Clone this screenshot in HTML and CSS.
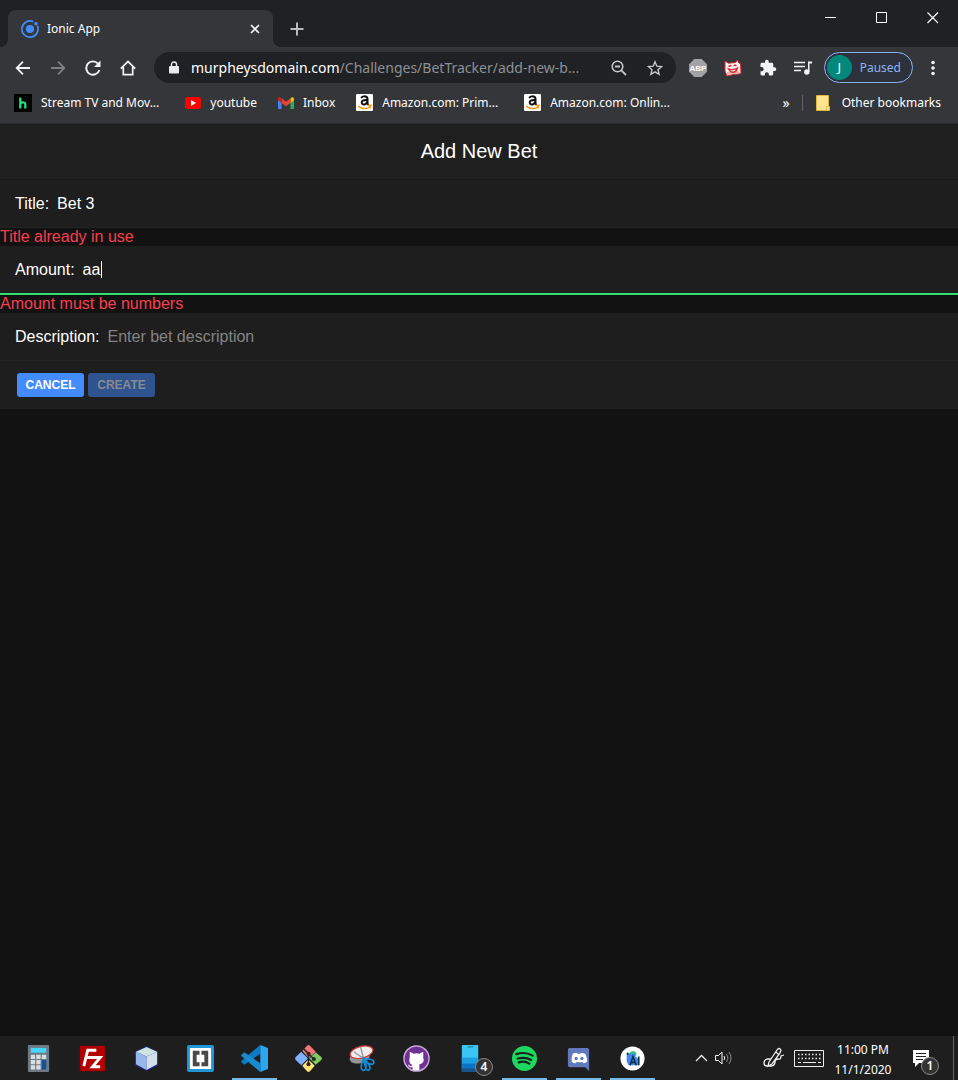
FILE: index.html
```
<!DOCTYPE html>
<html lang="en">
<head>
<meta charset="utf-8">
<meta name="viewport" content="width=device-width, initial-scale=1">
<title>Ionic App</title>
<link rel="stylesheet" href="styles.css">
</head>
<body>
<header class="browser">
  <div class="tab-strip">
    <div class="tab">
      <svg class="tab-icon" viewBox="0 0 18 18"><path d="M12.2 1.6A8.1 8.1 0 1 0 16.4 5.8" fill="none" stroke="#428cff" stroke-width="1.7"/><circle cx="9" cy="9" r="4.1" fill="#428cff"/><circle cx="15" cy="3.7" r="1.8" fill="#428cff"/></svg>
      <span class="tab-title">Ionic App</span>
      <button class="icon-button tab-close" aria-label="Close tab"><svg width="10" height="10" viewBox="0 0 10 10"><path d="M1 1l8 8M9 1L1 9" stroke="#fff" stroke-width="1.7"/></svg></button>
    </div>
    <button class="icon-button new-tab" aria-label="New tab"><svg width="14" height="14" viewBox="0 0 14 14"><path d="M7 .5v13M.5 7h13" stroke="#b9bbbf" stroke-width="2"/></svg></button>
    <div class="window-controls">
      <button class="icon-button" aria-label="Minimize"><svg width="12" height="12" viewBox="0 0 12 12"><path d="M0 5.5h11" stroke="#fff"/></svg></button>
      <button class="icon-button" aria-label="Maximize"><svg width="12" height="12" viewBox="0 0 12 12"><path d="M.5.5h10v10H.5z" fill="none" stroke="#fff"/></svg></button>
      <button class="icon-button" aria-label="Close"><svg width="12" height="12" viewBox="0 0 12 12"><path d="M.5.5l10.500 10.500M11 .5L.5 11" stroke="#fff" stroke-width="1.1"/></svg></button>
    </div>
  </div>
  <div class="nav-bar">
    <div class="nav-buttons">
      <button class="icon-button" aria-label="Back"><svg width="16" height="16" viewBox="0 0 16 16"><path d="M15 8H2M8 1.700L1.700 8 8 14.300" fill="none" stroke="#f1f3f4" stroke-width="1.800"/></svg></button>
      <button class="icon-button" aria-label="Forward"><svg width="16" height="16" viewBox="0 0 16 16"><path d="M1 8h13M8 1.700L14.300 8 8 14.300" fill="none" stroke="#7d7f83" stroke-width="1.800"/></svg></button>
      <button class="icon-button" aria-label="Reload"><svg width="16" height="16" viewBox="0 0 16 16"><path d="M14.400 10A6.700 6.700 0 1 1 13 3.600" fill="none" stroke="#f1f3f4" stroke-width="1.900"/><path d="M15.500.5v6.500H9z" fill="#f1f3f4"/></svg></button>
      <button class="icon-button" aria-label="Home"><svg width="16" height="16" viewBox="0 0 16 16"><path d="M.8 8.700L8 1.500l7.200 7.200M3.300 7v7.600h9.400V7" fill="none" stroke="#f1f3f4" stroke-width="1.700"/></svg></button>
    </div>
    <div class="address-bar">
      <svg class="lock" width="10" height="13" viewBox="0 0 10 13"><path d="M2.500 5V3.500a2.500 2.500 0 0 1 5 0V5" fill="none" stroke="#e8eaed" stroke-width="1.400"/><rect y="5" width="10" height="7.500" rx="1" fill="#e8eaed"/></svg>
      <div class="url" role="textbox" aria-label="Address" tabindex="0">murpheysdomain.com<span class="url-path">/Challenges/BetTracker/add-new-b...</span></div>
      <button class="icon-button" aria-label="Zoom"><svg width="16" height="16" viewBox="0 0 16 16"><circle cx="6.500" cy="6.500" r="5.300" fill="none" stroke="#c4c6c9" stroke-width="1.600"/><path d="M4 6.500h5M10.300 10.300l4.700 4.700" stroke="#c4c6c9" stroke-width="1.800"/></svg></button>
      <button class="icon-button" aria-label="Bookmark"><svg width="16" height="16" viewBox="0 0 16 16"><path d="M8 1.800l1.800 4.400 4.800.4-3.600 3.100 1.100 4.600L8 11.800l-4.100 2.500L5 9.700 1.400 6.600l4.800-.4z" fill="none" stroke="#c4c6c9" stroke-width="1.400"/></svg></button>
    </div>
    <div class="extensions">
      <button class="icon-button" aria-label="Adblock Plus"><svg width="18" height="18" viewBox="0 0 18 18"><path d="M5.300 0h7.400L18 5.300v7.400L12.700 18H5.300L0 12.700V5.300z" fill="#a2a2a2"/><text class="abp" x="9" y="12" text-anchor="middle">ABP</text></svg></button>
      <button class="icon-button" aria-label="Cat extension"><svg width="18" height="18" viewBox="0 0 18 18"><path d="M1 2l3.500 2.200 7-.7L13.500 1l1.300 3 1.700.7.500 10-8 .8-6 1.500L1 12z" fill="#fff1ef" stroke="#c92b33"/><path d="M3 13l12-1 1 2-13 2z" fill="#f1b4b2"/><path d="M4.500 7.500l2-1 1 .8M9.500 7l1.500-1 1.500.7M4.500 10q4.500 1.500 9-.8-1 3.500-4 4t-5-3.200z" fill="none" stroke="#d82e37" stroke-width="1.400"/></svg></button>
      <button class="icon-button" aria-label="Extensions"><svg width="18" height="18" viewBox="0 0 24 24"><path fill="#f1f3f4" d="M20.500 11H19V7c0-1.100-.9-2-2-2h-4V3.500a2.500 2.500 0 0 0-5 0V5H4c-1.100 0-2 .9-2 2v3.800h1.500a2.700 2.700 0 0 1 0 5.400H2V20c0 1.100.9 2 2 2h3.800v-1.500a2.700 2.700 0 0 1 5.400 0V22H17c1.100 0 2-.9 2-2v-4h1.500a2.500 2.500 0 0 0 0-5z"/></svg></button>
      <button class="icon-button" aria-label="Media controls"><svg width="18" height="18" viewBox="0 0 18 18"><path d="M0 3.500h11M0 7.500h11M0 11.500h7" stroke="#f1f3f4" stroke-width="1.700"/><path d="M14 13V2.600h4v2h-2.500V13z" fill="#f1f3f4"/><circle cx="12.800" cy="13" r="2.700" fill="#f1f3f4"/></svg></button>
    </div>
    <button class="profile"><span class="avatar">J</span>Paused</button>
    <button class="icon-button menu" aria-label="Menu"><svg width="4" height="16" viewBox="0 0 4 16"><g fill="#f1f3f4"><circle cx="2" cy="2.500" r="1.800"/><circle cx="2" cy="8" r="1.800"/><circle cx="2" cy="13.500" r="1.800"/></g></svg></button>
  </div>
  <nav class="bookmarks" aria-label="Bookmarks">
    <a class="bookmark b-stream" href="#"><svg width="18" height="18" viewBox="0 0 18 18"><path fill="#000" d="M0 0h18v18H0z"/><path d="M6.300 3.500v11M6.300 9q5-1.800 5 1.500v4" fill="none" stroke="#1ce783" stroke-width="2.200"/></svg>Stream TV and Mov...</a>
    <a class="bookmark" href="#"><svg width="16" height="16" viewBox="0 0 16 16"><rect y="2" width="16" height="12" rx="2.500" fill="#f00"/><path d="M6 5l5 3-5 3z" fill="#fff"/></svg>youtube</a>
    <a class="bookmark" href="#"><svg width="16" height="16" viewBox="0 0 16 16"><path d="M0 4v10h3.600V7z" fill="#4285f4"/><path d="M12.400 7v7H16V4z" fill="#34a853"/><path d="M12.400 3.500V8L16 5.300V3.500q-1.200-2.500-3.600 0z" fill="#fbbc04"/><path d="M3.600 3.300L8 6.700l4.400-3.400V8L8 11.300 3.600 8z" fill="#ea4335"/><path d="M0 3.500v1.800L3.600 8V3.300Q1 1 0 3.500z" fill="#c5221f"/></svg>Inbox</a>
    <a class="bookmark" href="#"><svg width="17" height="17" viewBox="0 0 17 17"><rect width="17" height="17" rx="1" fill="#fff"/><path d="M5.200 4.200Q6 2.200 8.500 2.200t3 2.300v5l1 1.500M11 6Q5.300 5.800 5.700 8.700c.4 3 4.800 2.300 5.300-1" fill="none" stroke="#111" stroke-width="2"/><path d="M2 12.200q6 4.500 12 1M12 11.500l3-.2-1 3" fill="none" stroke="#f79b18" stroke-width="1.500"/></svg>Amazon.com: Prim...</a>
    <a class="bookmark b-online" href="#"><svg width="17" height="17" viewBox="0 0 17 17"><rect width="17" height="17" rx="1" fill="#fff"/><path d="M5.200 4.200Q6 2.200 8.500 2.200t3 2.300v5l1 1.500M11 6Q5.300 5.800 5.700 8.700c.4 3 4.800 2.300 5.300-1" fill="none" stroke="#111" stroke-width="2"/><path d="M2 12.200q6 4.500 12 1M12 11.500l3-.2-1 3" fill="none" stroke="#f79b18" stroke-width="1.500"/></svg>Amazon.com: Onlin...</a>
    <button class="icon-button more" aria-label="More bookmarks">»</button>
    <a class="bookmark other" href="#"><svg width="14" height="16" viewBox="0 0 14 16"><path d="M.5.5h12v11h1v4H.5z" fill="#ffe391" stroke="#dfb93f"/><path d="M10.500 15v-3.500h3" fill="none" stroke="#dfb93f"/></svg>Other bookmarks</a>
  </nav>
</header>

<main class="app">
  <h1 class="app-title">Add New Bet</h1>
  <form class="bet-form">
    <div class="item">
      <label for="title">Title:</label>
      <div class="field"><input id="title" type="text" value="Bet 3"></div>
    </div>
    <p class="error">Title already in use</p>
    <div class="item item-active">
      <label for="amount">Amount:</label>
      <div class="field"><input id="amount" type="text" value="aa"><span class="caret"></span></div>
    </div>
    <p class="error">Amount must be numbers</p>
    <div class="item">
      <label for="description">Description:</label>
      <div class="field"><input id="description" type="text" placeholder="Enter bet description"></div>
    </div>
    <div class="item actions">
      <button class="action" type="button">CANCEL</button>
      <button class="action" type="submit" disabled>CREATE</button>
    </div>
  </form>
</main>

<footer class="taskbar">
  <div class="apps">
    <button class="task" aria-label="Calculator"><svg viewBox="0 0 28 28"><rect x="3" width="22" height="28" rx="1" fill="#6d7984"/><path fill="#45d4fb" d="M6 3h16v5H6z"/><path fill="#d9dde0" d="M6 10h4.500v4.500H6zM11.700 10h4.500v4.500h-4.500zM17.400 10H22v4.500h-4.600zM6 15.500h4.500V20H6zM11.700 15.500h4.500V20h-4.500zM6 21h4.500v4.500H6zM11.700 21h4.500v4.500h-4.500z"/><path fill="#12529b" d="M17.400 15.500H22v10h-4.600z"/></svg></button>
    <button class="task" aria-label="FileZilla"><svg viewBox="0 0 28 28"><path fill="#b50000" stroke="#850000" stroke-dasharray="1.500" d="M1 1h26v26H1z"/><path d="M18 5.500H9L5 22M7.500 13H15M13 13h9L14 22.500h8" fill="none" stroke="#fff" stroke-width="3"/></svg></button>
    <button class="task" aria-label="VirtualBox"><svg viewBox="0 0 28 28"><path d="M14 1l12 6v14l-12 6-12-6V7z" fill="#1d2684"/><path d="M14 2l11 5-11 5L3 7z" fill="#cce3df"/><path d="M3 7l11 5v14L3 20z" fill="#96b7ee"/><path d="M25 7l-11 5v14l11-6z" fill="#d2dfeb"/></svg></button>
    <button class="task" aria-label="Brackets"><svg viewBox="0 0 28 28"><rect width="28" height="28" rx="2" fill="#2196d6"/><rect x="3" y="3" width="22" height="22" rx="1" fill="#fff"/><path d="M13 6H6v16h7v-4h-3v-8h3zM15 6h7v16h-7v-4h3v-8h-3z" fill="#494949"/></svg></button>
    <button class="task running" aria-label="Visual Studio Code"><svg viewBox="0 0 28 28"><path d="M20 0v9L3.500 20.500.3 18v-1.500z" fill="#0b7ac0"/><path d="M20 28v-9L3.500 7.500.3 10v1.500z" fill="#168bd2"/><path d="M20 0l8 3v22l-8 3z" fill="#29a7f1"/></svg></button>
    <button class="task" aria-label="Git"><svg viewBox="0 0 28 28"><path d="M12.500.8q1.500-1.500 3 0L21.500 7 14.500 14 7.500 6z" fill="#f47575"/><path d="M6.500 7L13.500 14l-7 7L.8 15.500q-1.500-1.500 0-3z" fill="#80b0ff"/><path d="M21.500 7.500l5.700 5q1.500 1.500 0 3l-5.700 5L15 14z" fill="#80ca62"/><path d="M14 15l6.500 6.500-5 5.700q-1.500 1.500-3 0l-5-5.700z" fill="#ffe174"/><path d="M9 4l5 5v11M14 9l5 5" fill="none" stroke="#252525" stroke-width="1.600"/><g fill="#252525"><circle cx="14" cy="9" r="2.100"/><circle cx="14" cy="20" r="2.100"/><circle cx="19.500" cy="14.500" r="2.100"/></g></svg></button>
    <button class="task" aria-label="Snipping Tool"><svg viewBox="0 0 28 28"><ellipse cx="11" cy="13" rx="10.500" ry="6" fill="#949494" transform="rotate(-12 11 13)"/><ellipse cx="13" cy="7.500" rx="12" ry="6" fill="#eee" stroke="#d53d40" stroke-width="1.300" transform="rotate(-14 13 7.500)"/><path d="M12 2l3 12M5 7l10 7" stroke="#9a9a9a" stroke-width="1.500"/><path d="M15 14q7 0 10 2 2 3-1 4-5 0-9-6zM15 14q-3 7-2 11 2 3 4 0 2-5-2-11zM15 14q6 5 7 10-2 4-4 1-2-5-3-11z" fill="none" stroke="#1689d4" stroke-width="1.800"/></svg></button>
    <button class="task" aria-label="GitHub"><svg viewBox="0 0 28 28"><circle cx="14" cy="14" r="13" fill="#703096" stroke="#c8a9da" stroke-width="1.500"/><path d="M7 7l4 2q3-1 6 0l4-2v6q2 6-4 7v6q-3 1-7 0v-3q-4 1-5-3 3 3 5 1-5-2-3-8z" fill="#fff"/></svg></button>
    <button class="task" aria-label="Your Phone, 4 notifications"><svg viewBox="0 0 28 28"><rect x="5" width="17" height="28" rx="1" fill="#39c6f4"/><path fill="#1a9fe3" d="M5 13h17v6H5z"/><path fill="#0875c5" d="M5 19h17v5H5z"/><path fill="#17538d" d="M5 24h17v4H5z"/><path d="M11 2h6" stroke="#176d9d"/></svg><span class="badge">4</span></button>
    <button class="task running" aria-label="Spotify"><svg viewBox="0 0 28 28"><circle cx="14" cy="14" r="13" fill="#1ed760"/><path d="M5.500 9.500q9-3 17 1.500M7 14q8-2 14 1.500M8 18q6-2 11 1.300" fill="none" stroke="#172019" stroke-width="2.300" stroke-linecap="round"/></svg></button>
    <button class="task running" aria-label="Discord"><svg viewBox="0 0 28 28"><path d="M5 3h18q2 0 2 2v22l-4-4H5q-2 0-2-2V5q0-2 2-2z" fill="#6277bc"/><path d="M8 9q2-1 4-1l1 1h3l1-1 4 1q2 4 2 8-2 2-4 2l-1-1.500q-3 .8-6 0L11 19q-3 0-4-2-.500-4 1-8z" fill="#fff"/><circle cx="11.500" cy="14" r="1.700" fill="#6277bc"/><circle cx="17.500" cy="14" r="1.700" fill="#6277bc"/></svg></button>
    <button class="task running" aria-label="Android Studio"><svg viewBox="0 0 28 28"><circle cx="14" cy="14" r="12.500" fill="#fff"/><path d="M10 9q4-5 8-1v3h-8z" fill="#32c878"/><path d="M8 9h9v3l3 2v7H10l-2-4z" fill="#4285f4"/><path d="M8 8h2v2H8z" fill="#073042"/><path d="M11.500 21l3-9 3.500 9M12.500 18h4M20.500 12v9" fill="none" stroke="#073042" stroke-width="1.600"/></svg></button>
  </div>
  <div class="tray">
    <button class="icon-button" aria-label="Show hidden icons"><svg width="13" height="8" viewBox="0 0 13 8"><path d="M1 7l5.500-5.500L12 7" fill="none" stroke="#eee" stroke-width="1.300"/></svg></button>
    <button class="icon-button volume" aria-label="Volume"><svg width="18" height="16" viewBox="0 0 18 16"><path d="M.6 5.500h2.700L7 2v12L3.300 10.500H.6z" fill="none" stroke="#fff"/><path d="M9 6q1.500 2 0 4" fill="none" stroke="#fff"/><path d="M11.500 4q3 4 0 8M14 2q4 6 0 12" fill="none" stroke="#888"/></svg></button>
    <button class="icon-button pen" aria-label="Windows Ink"><svg width="22" height="22" viewBox="0 0 22 22"><path d="M6 15L14 3q2-3 4 0l-1 3-8 11-4 2zM13 5l3 3M8 12H4q-3 1-3 4t3 3h5q3-1 3-4t3-3q3 1 3-3l3-1" fill="none" stroke="#eee" stroke-width="1.300"/></svg></button>
    <button class="icon-button" aria-label="Touch keyboard"><svg width="30" height="17" viewBox="0 0 30 17"><path d="M.5.5h29v16H.5z" fill="none" stroke="#eee"/><path d="M4 4.500h23M4 8.500h23" stroke="#eee" stroke-width="1.500" stroke-dasharray="1.500 2"/><path d="M4 12.500h3M9 12.500h13M24 12.500h3" stroke="#eee"/></svg></button>
    <time class="clock" datetime="2020-11-01T23:00"><span>11:00 PM</span><span>11/1/2020</span></time>
    <button class="icon-button notes" aria-label="1 notification"><svg width="17" height="17" viewBox="0 0 17 17"><path d="M0 0h16v13H6l-4 4v-4H0z" fill="#fff"/><path d="M3 3.500h10M3 6.500h10M3 9.500h7" stroke="#222"/></svg><span class="badge">1</span></button>
  </div>
</footer>
</body>
</html>
```
FILE: styles.css
```
* {
  box-sizing: border-box;
}

body {
  margin: 0;
  min-height: 100vh;
  display: flex;
  flex-direction: column;
  background: #121212;
  color: #fff;
  font: 12px/16px "Noto Sans", "Open Sans", sans-serif;
}

button {
  font: inherit;
  color: inherit;
  border: 0;
  padding: 0;
  background: none;
}

svg {
  display: block;
  flex: none;
}

.icon-button {
  display: flex;
  align-items: center;
  justify-content: center;
  flex: none;
}

/* Browser frame */
.browser {
  background: #35363a;
  border-bottom: 1px solid #292a2d;
}

.tab-strip {
  display: flex;
  align-items: center;
  height: 47px;
  padding-left: 8px;
  background: #202124;
}

.tab {
  position: relative;
  display: flex;
  align-items: center;
  align-self: flex-end;
  width: 265px;
  height: 37px;
  padding: 0 13px;
  background: #35363a;
  border-radius: 8px 8px 0 0;
}

.tab::before,
.tab::after {
  content: "";
  position: absolute;
  bottom: 0;
  width: 8px;
  height: 8px;
}

.tab::before {
  left: -8px;
  background: radial-gradient(circle at 0 0, transparent 8px, #35363a 8px);
}

.tab::after {
  right: -8px;
  background: radial-gradient(circle at 100% 0, transparent 8px, #35363a 8px);
}

.tab-icon {
  width: 18px;
  height: 18px;
}

.tab-title {
  flex: 1;
  margin-left: 8px;
}

.new-tab {
  margin: 10px 0 0 17px;
}

.window-controls {
  display: flex;
  align-self: flex-start;
  margin-left: auto;
}

.window-controls .icon-button {
  width: 51px;
  height: 35px;
}

.nav-bar {
  display: flex;
  align-items: center;
  height: 41px;
  padding: 0 13px 0 15px;
}

.nav-buttons {
  display: flex;
  gap: 19px;
}

.address-bar {
  display: flex;
  align-items: center;
  flex: 1;
  min-width: 0;
  height: 31px;
  margin-left: 18px;
  padding: 0 13px 0 15px;
  background: #202124;
  border-radius: 16px;
  gap: 20px;
}

.lock {
  margin-right: -8px;
}

.url {
  flex: 1;
  min-width: 0;
  margin-right: -12px;
  overflow: hidden;
  white-space: nowrap;
  font-size: 14px;
  line-height: 20px;
}

.url-path {
  color: #8d9095;
}

.extensions {
  display: flex;
  gap: 17px;
  margin: 0 12px 0 13px;
}

.profile {
  display: flex;
  align-items: center;
  gap: 8px;
  height: 31px;
  padding: 0 11px 0 2px;
  border: 1px solid #8ab4f8;
  border-radius: 16px;
  background: #2d313b;
  color: #8ab4f8;
}

.avatar {
  width: 25px;
  height: 25px;
  border-radius: 50%;
  background: #00897b;
  color: #fff;
  font-size: 13px;
  line-height: 25px;
}

.menu {
  width: 24px;
  margin-left: 8px;
}

.abp {
  font: bold 8px "Liberation Sans", sans-serif;
  fill: #fff;
}

.bookmarks {
  display: flex;
  align-items: center;
  height: 35px;
  padding: 0 17px 6px 14px;
  gap: 21px;
  white-space: nowrap;
}

.bookmark {
  display: flex;
  align-items: center;
  gap: 9px;
  color: #fff;
  text-decoration: none;
}

.b-stream {
  margin-right: 5px;
}

.b-online {
  margin-left: 5px;
}

.more {
  margin-left: auto;
  margin-right: -9px;
  font-size: 14px;
}

.other {
  gap: 12px;
  padding-left: 13px;
  border-left: 1px solid #626367;
}

/* Bet form */
.app {
  flex: 1;
  font: 16px/18px "Liberation Sans", Arial, sans-serif;
}

.app-title {
  margin: 0;
  padding: 15px 0 16px;
  background: #1f1f1f;
  border-bottom: 1px solid #1a1a1a;
  font-size: 20px;
  font-weight: normal;
  line-height: 24px;
  text-align: center;
}

.item {
  display: flex;
  align-items: center;
  gap: 8px;
  height: 48px;
  padding: 0 15px;
  background: #1e1e1e;
  border-bottom: 1px solid #222;
}

.item-active {
  height: 49px;
  border-bottom: 2px solid #2fdf75;
}

.field {
  position: relative;
  flex: 1;
}

.field input {
  display: block;
  width: 100%;
  padding: 0;
  border: 0;
  outline: 0;
  background: none;
  color: #fff;
  font: inherit;
}

.field input::placeholder {
  color: #848484;
  opacity: 1;
}

.caret {
  position: absolute;
  left: 18px;
  top: 0;
  width: 1px;
  height: 17px;
  background: #fff;
}

.error {
  margin: 0;
  color: #f93e4f;
}

.actions {
  gap: 4px;
  padding-left: 17px;
}

.action {
  width: 67px;
  height: 24px;
  border-radius: 3px;
  background: #428cff;
  font-size: 12px;
  font-weight: bold;
}

.action:disabled {
  background: #2f538e;
  color: #868a91;
}

/* Taskbar */
.taskbar {
  display: flex;
  justify-content: space-between;
  height: 44px;
  background: #1e1e1e;
}

.apps {
  display: flex;
  gap: 9px;
  padding-left: 16px;
}

.task {
  position: relative;
  display: flex;
  align-items: center;
  justify-content: center;
  width: 45px;
  padding-top: 2px;
  border-bottom: 2px solid transparent;
}

.task svg {
  width: 27px;
  height: 27px;
}

.running {
  border-bottom-color: #76b9ed;
}

.badge {
  position: absolute;
  right: 0;
  bottom: 2px;
  width: 18px;
  height: 18px;
  border: 1px solid #898989;
  border-radius: 50%;
  background: #333;
  font-size: 12px;
  font-weight: 600;
  line-height: 16px;
  text-align: center;
}

.tray {
  display: flex;
  align-items: center;
  padding-right: 4px;
}

.volume {
  margin-left: 7px;
}

.pen {
  margin: 0 9px 0 30px;
}

.clock {
  display: flex;
  flex-direction: column;
  width: 78px;
  padding-top: 4px;
  line-height: 20px;
  text-align: center;
}

.notes {
  position: relative;
  height: 44px;
  width: 52px;
  padding-right: 12px;
  border-right: 1px solid #666;
}

.notes .badge {
  right: 14px;
  bottom: 5px;
}
```
